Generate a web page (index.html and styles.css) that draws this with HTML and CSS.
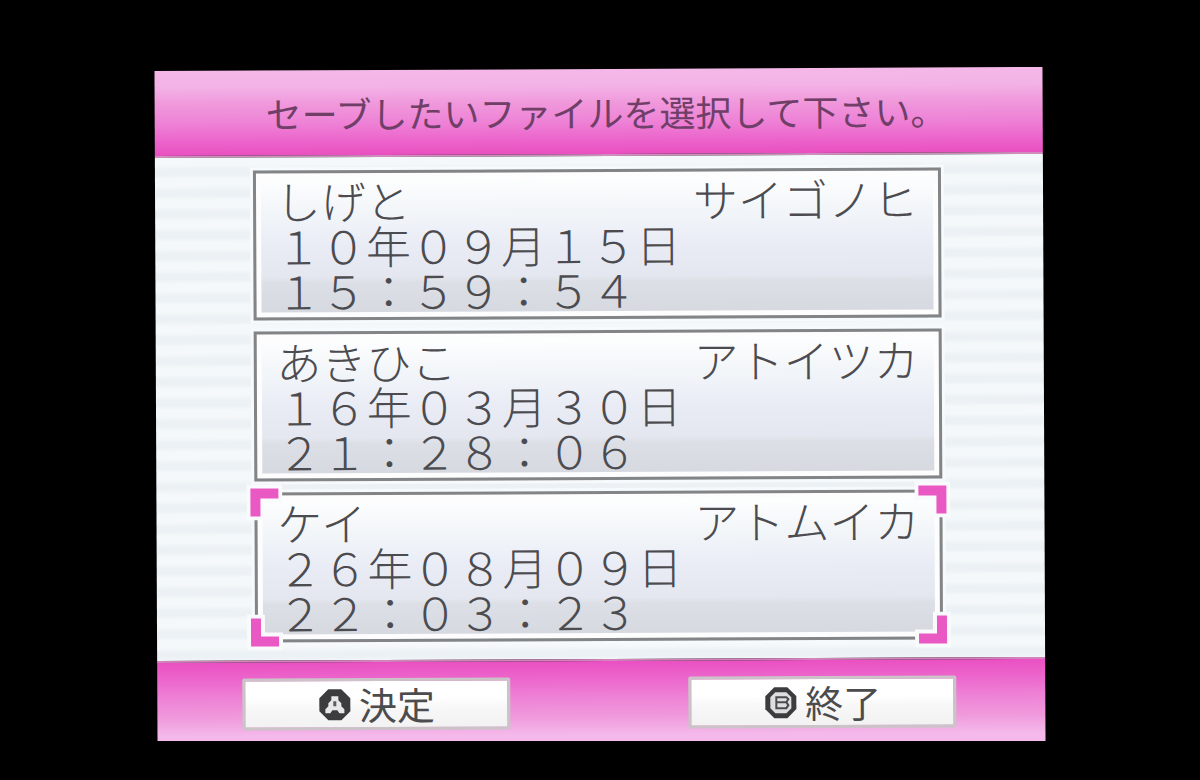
FILE: index.html
```html
<!DOCTYPE html>
<html lang="ja">
<head>
<meta charset="utf-8">
<title>セーブ</title>
<meta name="viewport" content="width=device-width, initial-scale=1">
<link rel="stylesheet" href="styles.css">
</head>
<body>
<svg class="defs" aria-hidden="true">
  <symbol id="corner" viewBox="0 0 36 36">
    <path d="M0 0H36V18H18V36H0Z" fill="#f8fafc"/>
    <path d="M4 4H32V14H14V32H4Z" fill="#ea58c4"/>
  </symbol>
</svg>
<div class="viewport">
  <main class="screen">
    <header class="header"><h1 class="title">セーブしたいファイルを選択して下さい。</h1></header>
    <section class="files">
      <button class="file" type="button">
        <span class="names"><span>しげと</span><span>サイゴノヒ</span></span>
        <span class="line">１０年０９月１５日</span>
        <span class="line">１５：５９：５４</span>
      </button>
      <button class="file" type="button">
        <span class="names"><span>あきひこ</span><span>アトイツカ</span></span>
        <span class="line">１６年０３月３０日</span>
        <span class="line">２１：２８：０６</span>
      </button>
      <button class="file" type="button" aria-pressed="true">
        <span class="names"><span>ケイ</span><span>アトムイカ</span></span>
        <span class="line">２６年０８月０９日</span>
        <span class="line">２２：０３：２３</span>
        <svg class="corner top-left" aria-hidden="true"><use href="#corner"/></svg>
        <svg class="corner top-right" aria-hidden="true"><use href="#corner"/></svg>
        <svg class="corner bottom-left" aria-hidden="true"><use href="#corner"/></svg>
        <svg class="corner bottom-right" aria-hidden="true"><use href="#corner"/></svg>
      </button>
    </section>
    <footer class="footer">
      <button class="action" type="button">
        <svg class="key" viewBox="0 0 33 33" aria-hidden="true">
          <path d="M10 1H23L32 10V23L23 32H10L1 23V10Z" fill="#3c3c3e"/>
          <path d="M13 8H20V12L23 15V18L26 21V25H21L19 22H14L12 25H7V21L10 18V15L13 12Z" fill="#e8e8ea"/>
          <path d="M15 13H18V18H15Z" fill="#5c5c5e"/>
        </svg>
        決定
      </button>
      <button class="action" type="button">
        <svg class="key" viewBox="0 0 33 33" aria-hidden="true">
          <path d="M10 1H23L32 10V23L23 32H10L1 23V10Z" fill="#3c3c3e"/>
          <path d="M11 6H22L27 11V22L22 27H11L6 22V11Z" fill="#dededf"/>
          <path d="M11 11H22L24 13L22 16L24 19L22 22H11M12 11V22M12 16H22" fill="none" stroke="#4c4c4e" stroke-width="2"/>
        </svg>
        終了
      </button>
    </footer>
  </main>
</div>
</body>
</html>
```
FILE: styles.css
```css
* {
  box-sizing: border-box;
}

body {
  margin: 0;
  background: #000;
  color: #4c4b4f;
  font-family: "Noto Sans CJK JP", sans-serif;
}

button {
  font: inherit;
  color: inherit;
  cursor: pointer;
}

.defs {
  position: absolute;
  width: 0;
  height: 0;
}

.viewport {
  padding-top: 69px;
  overflow: hidden;
}

.screen {
  width: 74%;
  margin: 0 auto -6px;
  transform: rotate(-0.26deg);
}

.header {
  padding: 19px 0 20px;
  border-bottom: 2px solid #cf8cbc;
  background: linear-gradient(#f4b8e8 0, #f3b2e6 20%, #f09adc 38%, #ee82d6 62%, #ec66cc 82%, #e94fc0 100%);
}

.title {
  margin: 0;
  padding-left: 12.5%;
  color: #703f68;
  font-size: 36px;
  font-weight: 400;
  line-height: 46px;
  white-space: nowrap;
}

.files {
  display: grid;
  gap: 11px;
  padding: 13px 11.5% 18px 11%;
  background: repeating-linear-gradient(#f4f8fa 0 7px, #ecf1f5 12px 17px, #f4f8fa 21px);
}

.file {
  position: relative;
  display: block;
  width: 100%;
  padding: 4px 20px 5px;
  border: 3px solid #828486;
  background: linear-gradient(#fff 0, #f3f6f9 25%, #e9ecf5 50%, #e4e7ef 72%, #dcdfe5 76%, #d5d8df 100%);
  box-shadow: inset 0 0 0 5px #fdfdfe, 0 0 0 3px #f7fafc;
  font-size: 45px;
  font-weight: 300;
  line-height: 45px;
  text-align: left;
  white-space: nowrap;
}

.names {
  display: flex;
  justify-content: space-between;
}

.line {
  display: block;
}

.corner {
  position: absolute;
  width: 36px;
  height: 36px;
}

.top-left {
  top: -11px;
  left: -11px;
}

.top-right {
  top: -11px;
  right: -11px;
  transform: rotate(90deg);
}

.bottom-left {
  bottom: -11px;
  left: -11px;
  transform: rotate(270deg);
}

.bottom-right {
  right: -11px;
  bottom: -11px;
  transform: rotate(180deg);
}

.footer {
  display: grid;
  grid-template-columns: 1fr 1fr;
  column-gap: 25%;
  padding: 16px 10% 18px 9.6%;
  border-top: 2px solid #d384bd;
  background: linear-gradient(#ea50c2 0, #ec66cc 20%, #ee82d6 42%, #f09adc 65%, #f4b8ea 85%, #f4b8ea 100%);
}

.action {
  display: flex;
  align-items: center;
  justify-content: center;
  gap: 8px;
  padding: 0;
  border: 3px solid #cbc3c8;
  border-radius: 2px;
  background: linear-gradient(#fff 0 35%, #f7f7f7 60%, #f2f2f2 100%);
  color: #4c4c4e;
  font-size: 38px;
  line-height: 46px;
}

.key {
  width: 33px;
  height: 33px;
}
```
